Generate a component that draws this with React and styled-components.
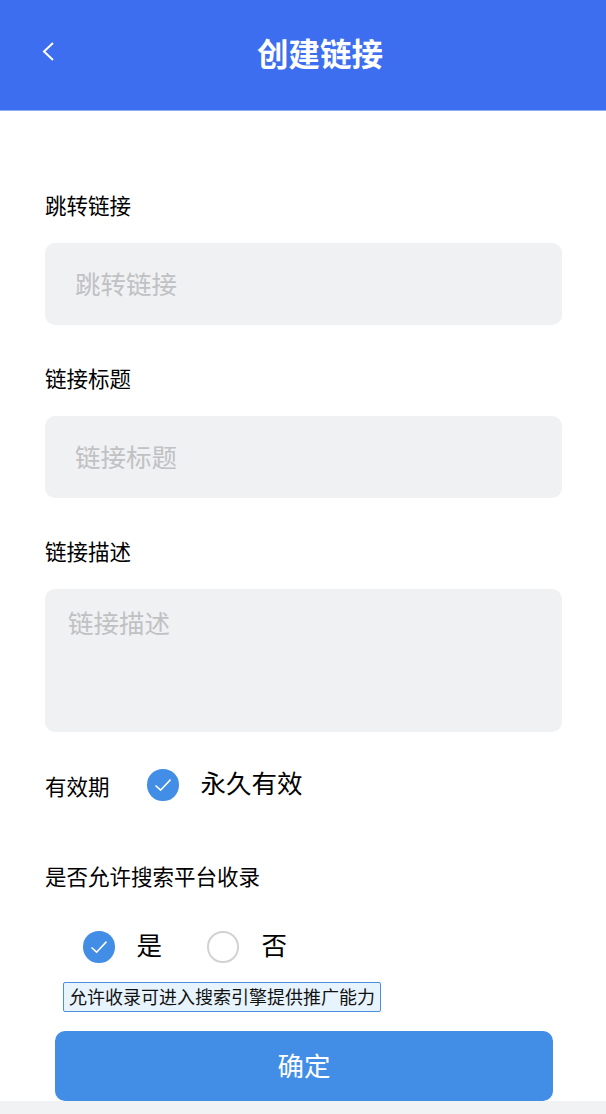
import React from "react";
import styled, { createGlobalStyle } from "styled-components";

const GlobalStyle = createGlobalStyle`
  html, body {
    margin: 0;
    padding: 0;
    background: #fff;
  }
  * {
    box-sizing: border-box;
  }
  body, input, textarea, button {
    font-family: "Noto Sans CJK SC", "Noto Sans", sans-serif;
  }
`;

const Page = styled.div`
  width: 606px;
  height: 1114px;
  overflow: hidden;
  display: flex;
  flex-direction: column;
  background: #f1f2f4;
`;

const Header = styled.header`
  height: 111px;
  flex-shrink: 0;
  display: flex;
  align-items: center;
  justify-content: center;
  position: relative;
  background: #3c6eef;
  border-bottom: 1px solid #8fb0f5;
`;

const BackButton = styled.span`
  position: absolute;
  left: 40px;
  top: 41px;
  width: 16px;
  height: 22px;
  display: flex;
`;

const Title = styled.h1`
  margin: 0 0 6px 34px;
  font-size: 31.5px;
  line-height: 40px;
  font-weight: 700;
  color: #fff;
`;

const Form = styled.form`
  flex: 1;
  background: #fff;
  padding: 80px 44px 0 45px;
  display: flex;
  flex-direction: column;
`;

const Label = styled.label`
  display: block;
  height: 30px;
  margin-bottom: 22px;
  font-size: 21.5px;
  line-height: 28px;
  color: #000;
`;

const Input = styled.input`
  display: block;
  width: 100%;
  height: 82px;
  margin-bottom: 39px;
  padding: 0 30px 4px;
  border: 0;
  border-radius: 10px;
  background: #f0f1f3;
  font-size: 25.5px;
  outline: none;

  &::placeholder {
    color: #c0c1c3;
    opacity: 1;
  }
`;

const TextArea = styled.textarea`
  display: block;
  width: 100%;
  height: 143px;
  margin: 0;
  padding: 14px 23px;
  border: 0;
  border-radius: 10px;
  background: #f0f1f3;
  font-size: 25.5px;
  line-height: 38px;
  resize: none;
  outline: none;

  &::placeholder {
    color: #c0c1c3;
    opacity: 1;
  }
`;

const ExpiryRow = styled.div`
  display: flex;
  align-items: center;
  height: 30px;
  margin-top: 38px;
`;

const ExpiryLabel = styled.span`
  width: 102px;
  font-size: 21.5px;
  line-height: 30px;
  padding-top: 2px;
  color: #000;
`;

const OptionText = styled.span`
  margin-left: ${(p) => p.$gap}px;
  font-size: 25.5px;
  line-height: 36px;
  color: #000;
  transform: translateY(-3px);
`;

const SearchLabel = styled.div`
  margin-top: 62px;
  height: 30px;
  font-size: 21.5px;
  line-height: 28px;
  color: #000;
`;

const RadioRow = styled.div`
  display: flex;
  align-items: center;
  height: 32px;
  margin-top: 39px;
  padding-left: 38px;
`;

const RadioOption = styled.div`
  display: flex;
  align-items: center;
  width: 124px;
`;

const Circle = styled.span`
  width: 31.5px;
  height: 31.5px;
  flex-shrink: 0;
  border-radius: 50%;
  display: flex;
  align-items: center;
  justify-content: center;
  background: ${(p) => (p.$checked ? "#428de5" : "#fff")};
  border: ${(p) => (p.$checked ? "0" : "2px solid #d2d2d2")};
`;

const Hint = styled.div`
  align-self: flex-start;
  margin: 19px 0 0 18px;
  width: 318px;
  height: 30px;
  border: 1.5px solid #4a90e2;
  border-radius: 2px;
  background: #e8f4fd;
  font-size: 18px;
  line-height: 26px;
  text-align: center;
  white-space: nowrap;
  color: #111;
`;

const SubmitButton = styled.button`
  display: block;
  width: 498px;
  height: 70px;
  margin: 19px 0 0 10px;
  padding: 0 0 4px;
  flex-shrink: 0;
  border: 0;
  border-radius: 10px;
  background: #428de5;
  color: #fff;
  font-size: 26.5px;
`;

const Footer = styled.div`
  height: 13px;
  flex-shrink: 0;
  background: #f1f2f4;
`;

function Check() {
  return (
    <svg width="18" height="14" viewBox="0 0 18 14" fill="none">
      <path d="M1.5 7.5 6.6 12.2 16.5 1.6" stroke="#fff" strokeWidth="1.6" />
    </svg>
  );
}

function Radio({ checked }) {
  return <Circle $checked={checked}>{checked && <Check />}</Circle>;
}

export default function App() {
  return (
    <Page>
      <GlobalStyle />
      <Header>
        <BackButton>
          <svg width="16" height="22" viewBox="0 0 16 22" fill="none">
            <path d="M13 2 4 10.5 13 19" stroke="#fff" strokeWidth="2" />
          </svg>
        </BackButton>
        <Title>创建链接</Title>
      </Header>
      <Form onSubmit={(e) => e.preventDefault()}>
        <Label>跳转链接</Label>
        <Input placeholder="跳转链接" />
        <Label>链接标题</Label>
        <Input placeholder="链接标题" />
        <Label>链接描述</Label>
        <TextArea placeholder="链接描述" />
        <ExpiryRow>
          <ExpiryLabel>有效期</ExpiryLabel>
          <Radio checked />
          <OptionText $gap={22}>永久有效</OptionText>
        </ExpiryRow>
        <SearchLabel>是否允许搜索平台收录</SearchLabel>
        <RadioRow>
          <RadioOption>
            <Radio checked />
            <OptionText $gap={22}>是</OptionText>
          </RadioOption>
          <RadioOption>
            <Radio />
            <OptionText $gap={23}>否</OptionText>
          </RadioOption>
        </RadioRow>
        <Hint>允许收录可进入搜索引擎提供推广能力</Hint>
        <SubmitButton>确定</SubmitButton>
      </Form>
      <Footer />
    </Page>
  );
}
